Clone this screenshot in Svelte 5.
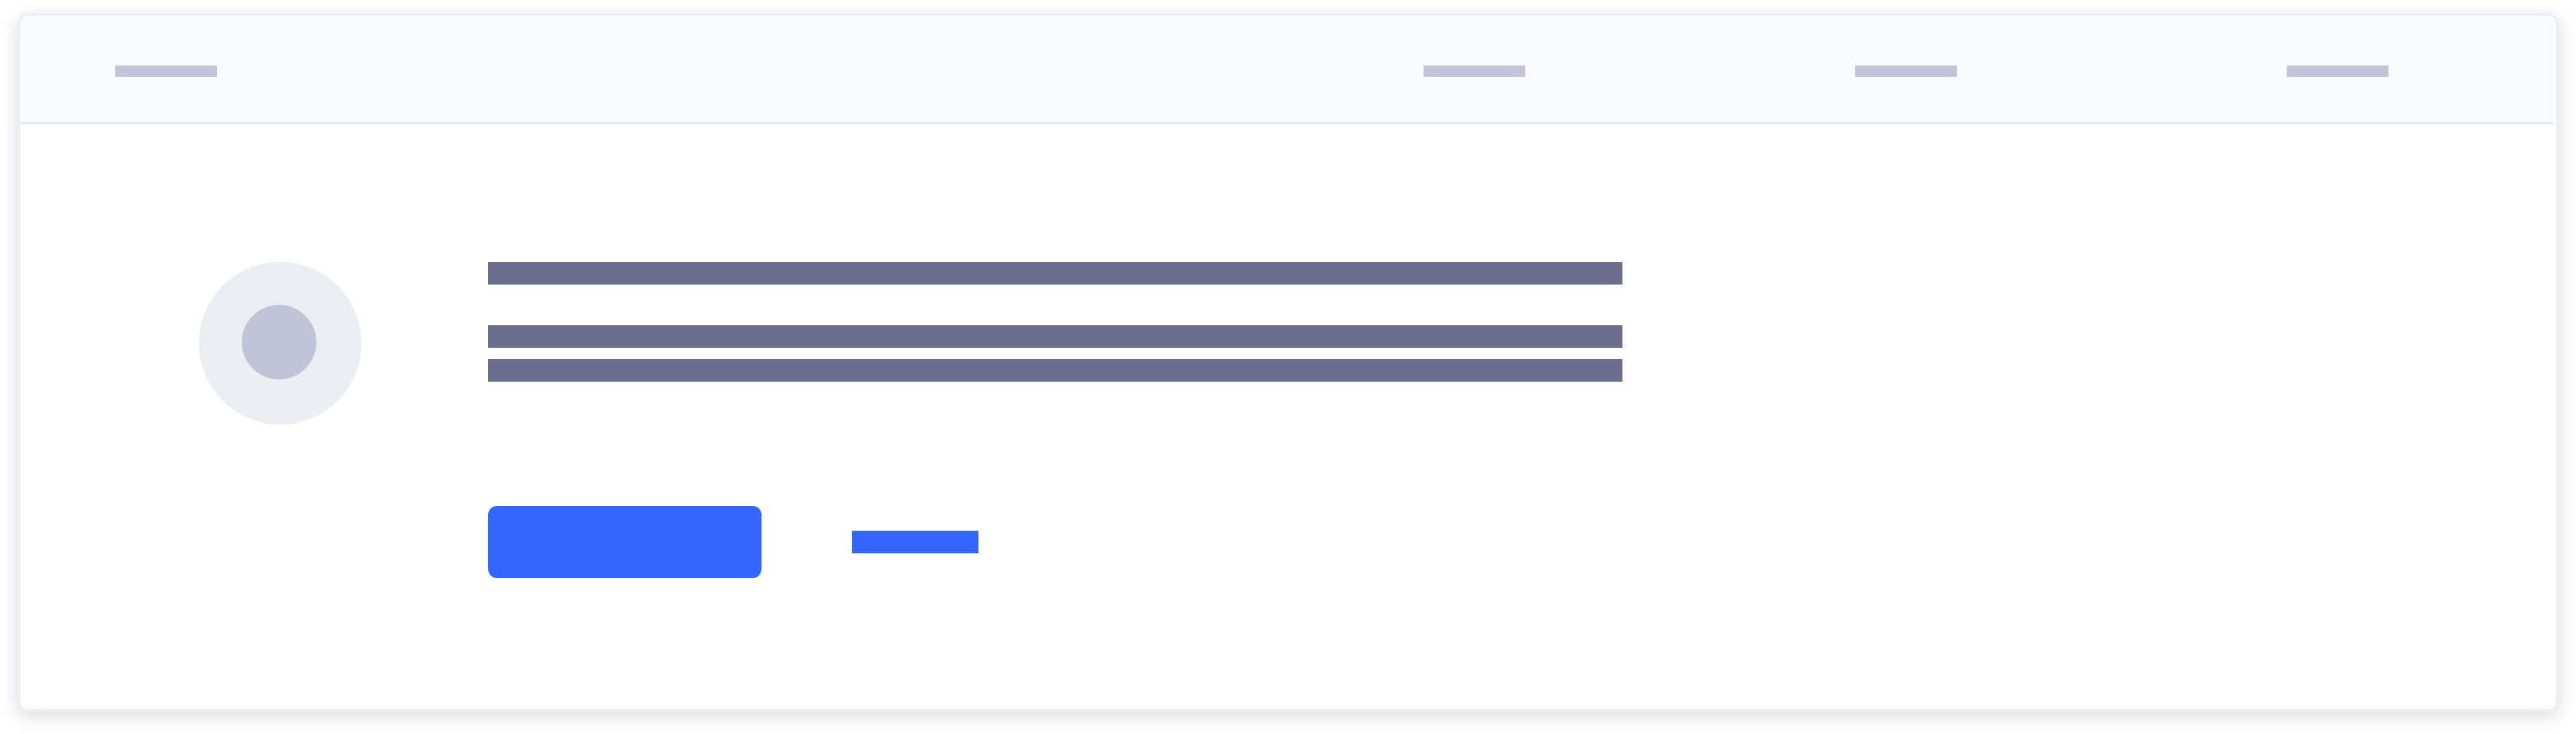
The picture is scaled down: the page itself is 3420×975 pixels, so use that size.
<script>
  const columns = ['second', 'third', 'fourth'];
</script>

<main class="page">
  <section class="card">
    <header class="header">
      <span class="label"></span>
      <div class="columns">
        {#each columns as column (column)}
          <span class="label"></span>
        {/each}
      </div>
    </header>

    <div class="body">
      <div class="avatar"><span class="avatar-core"></span></div>
      <div class="content">
        <div class="line title"></div>
        <div class="lines">
          <div class="line"></div>
          <div class="line"></div>
        </div>
        <div class="actions">
          <button class="primary" type="button" aria-label="Primary action"></button>
          <a class="secondary" href="#secondary" aria-label="Secondary action"></a>
        </div>
      </div>
    </div>
  </section>
</main>

<style>
  :global(body) {
    margin: 0;
    background: #fff;
    font-family: "Liberation Sans", sans-serif;
  }

  .page {
    padding: 18px 24px 30px;
  }

  .card {
    border: 3px solid #eeeff5;
    border-radius: 12px;
    background: #fff;
    box-shadow: 0 6px 24px rgba(0, 0, 0, 0.15);
  }

  .header {
    display: flex;
    align-items: center;
    justify-content: space-between;
    margin-right: 3px;
    padding: 66px 219px 60px 126px;
    border-bottom: 3px solid #e6e7f0;
    border-radius: 9px 12px 0 0;
    background: #fafbff;
  }

  .columns {
    display: flex;
    gap: 438px;
  }

  .label {
    display: block;
    width: 135px;
    height: 15px;
    background: #c1c4d6;
  }

  .body {
    display: flex;
    align-items: flex-start;
    gap: 168px;
    padding: 183px 237px 174px;
  }

  .avatar {
    box-sizing: border-box;
    flex: none;
    width: 216px;
    height: 216px;
    padding: 57px;
    border-radius: 50%;
    background: #edeef4;
  }

  .avatar-core {
    display: block;
    width: 99px;
    height: 99px;
    border-radius: 50%;
    background: #c1c4d6;
  }

  .content {
    flex: 0 1 1506px;
  }

  .line {
    height: 30px;
    background: #6b6e8c;
  }

  .title {
    margin-bottom: 54px;
  }

  .lines {
    display: grid;
    gap: 15px;
  }

  .actions {
    display: flex;
    align-items: center;
    gap: 120px;
    margin-top: 165px;
  }

  .primary {
    width: 363px;
    height: 96px;
    padding: 0;
    border: 0;
    border-radius: 12px;
    background: #3366ff;
    cursor: pointer;
  }

  .secondary {
    width: 168px;
    height: 30px;
    background: #3366ff;
  }
</style>
